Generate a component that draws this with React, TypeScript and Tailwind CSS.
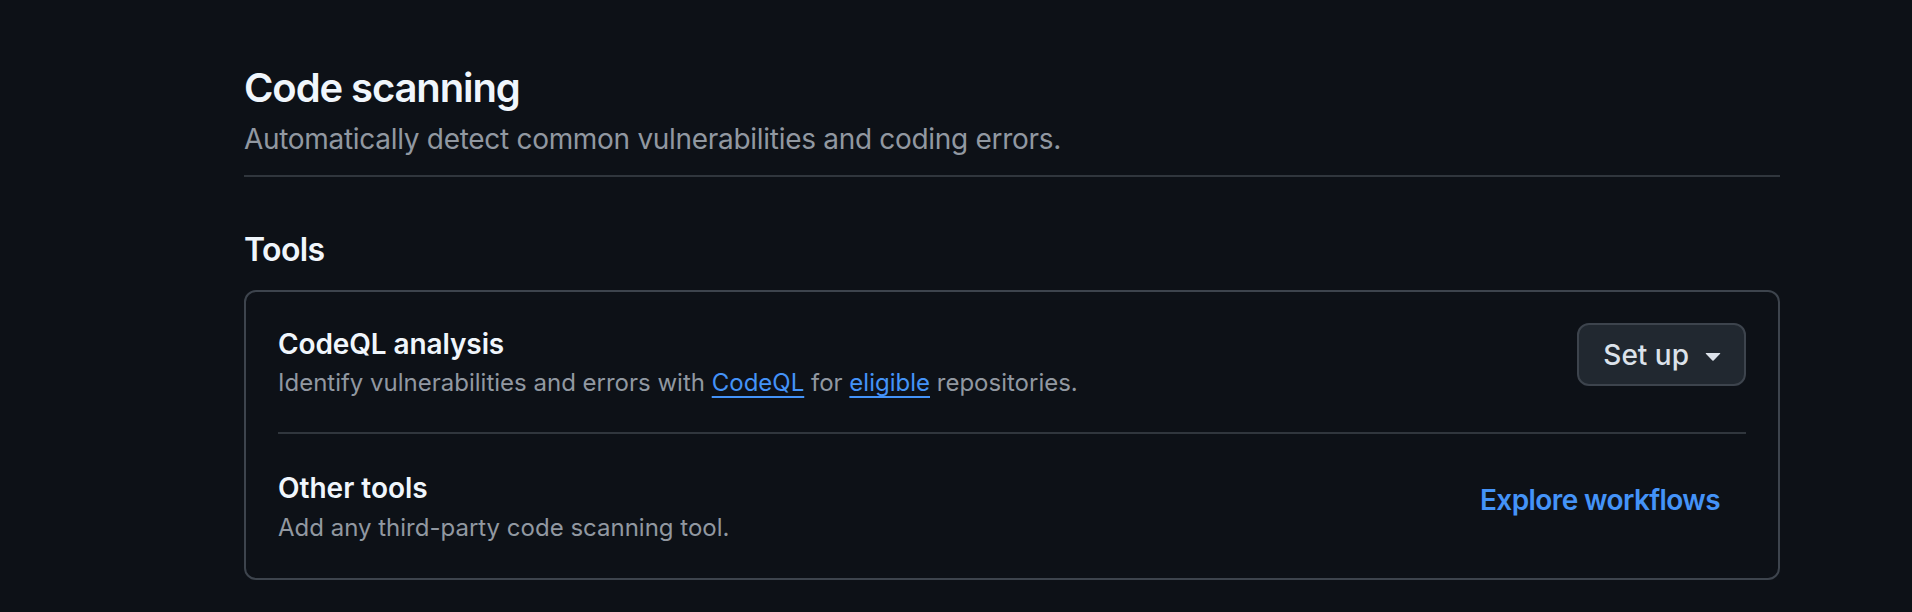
import React from 'react';

function TriangleDown() {
  return (
    <svg viewBox="0 0 16 16" width="32" height="32" fill="currentColor" aria-hidden="true">
      <path d="m4.427 7.427 3.396 3.396a.25.25 0 0 0 .354 0l3.396-3.396A.25.25 0 0 0 11.396 7H4.604a.25.25 0 0 0-.177.427Z" />
    </svg>
  );
}

export default function App() {
  return (
    <div className="min-h-[612px] w-full bg-[#0d1117] font-['Inter','Liberation_Sans',sans-serif] text-[#f0f6fc]">
      <div className="ml-[244px] w-[1536px] pt-[58px]">
        <div className="border-b-2 border-[#30363d] pb-[15px]">
          <h2 className="text-[40px] font-semibold leading-[60px] tracking-[-1.1px]">Code scanning</h2>
          <p className="text-[28px] leading-[42px] tracking-[-0.3px] text-[#9198a1]">
            Automatically detect common vulnerabilities and coding errors.
          </p>
        </div>

        <h3 className="mt-[49px] text-[32px] font-semibold leading-[48px] tracking-[-0.6px]">Tools</h3>

        <div className="mt-[16px] rounded-[12px] border-2 border-[#3d444d] px-[32px]">
          <div className="flex items-start justify-between pt-[31px] pb-[31px]">
            <div>
              <h4 className="text-[28px] font-semibold leading-[42px] tracking-[-0.1px]">CodeQL analysis</h4>
              <p className="text-[24px] leading-[36px] text-[#9198a1]">
                Identify vulnerabilities and errors with{' '}
                <a href="#" className="text-[#4493f8] underline decoration-2 underline-offset-[5px]">CodeQL</a> for{' '}
                <a href="#" className="text-[#4493f8] underline decoration-2 underline-offset-[5px]">eligible</a> repositories.
              </p>
            </div>
            <button className="flex h-[63px] items-center gap-[8px] rounded-[12px] border-2 border-[#3d444d] bg-[#212830] pl-[24px] pr-[15px] text-[28px] font-medium text-[#dce2ea]">
              <span>Set up</span>
              <TriangleDown />
            </button>
          </div>

          <div className="flex items-start justify-between border-t-2 border-[#30363d] pt-[33px] pb-[32px]">
            <div>
              <h4 className="text-[28px] font-semibold leading-[42px]">Other tools</h4>
              <p className="mt-[1px] text-[24px] leading-[36px] text-[#9198a1]">Add any third-party code scanning tool.</p>
            </div>
            <button className="mt-[1px] flex h-[63px] items-center rounded-[12px] px-[26px] text-[28px] font-semibold tracking-[-0.6px] text-[#4493f8]">
              Explore workflows
            </button>
          </div>
        </div>
      </div>
    </div>
  );
}
